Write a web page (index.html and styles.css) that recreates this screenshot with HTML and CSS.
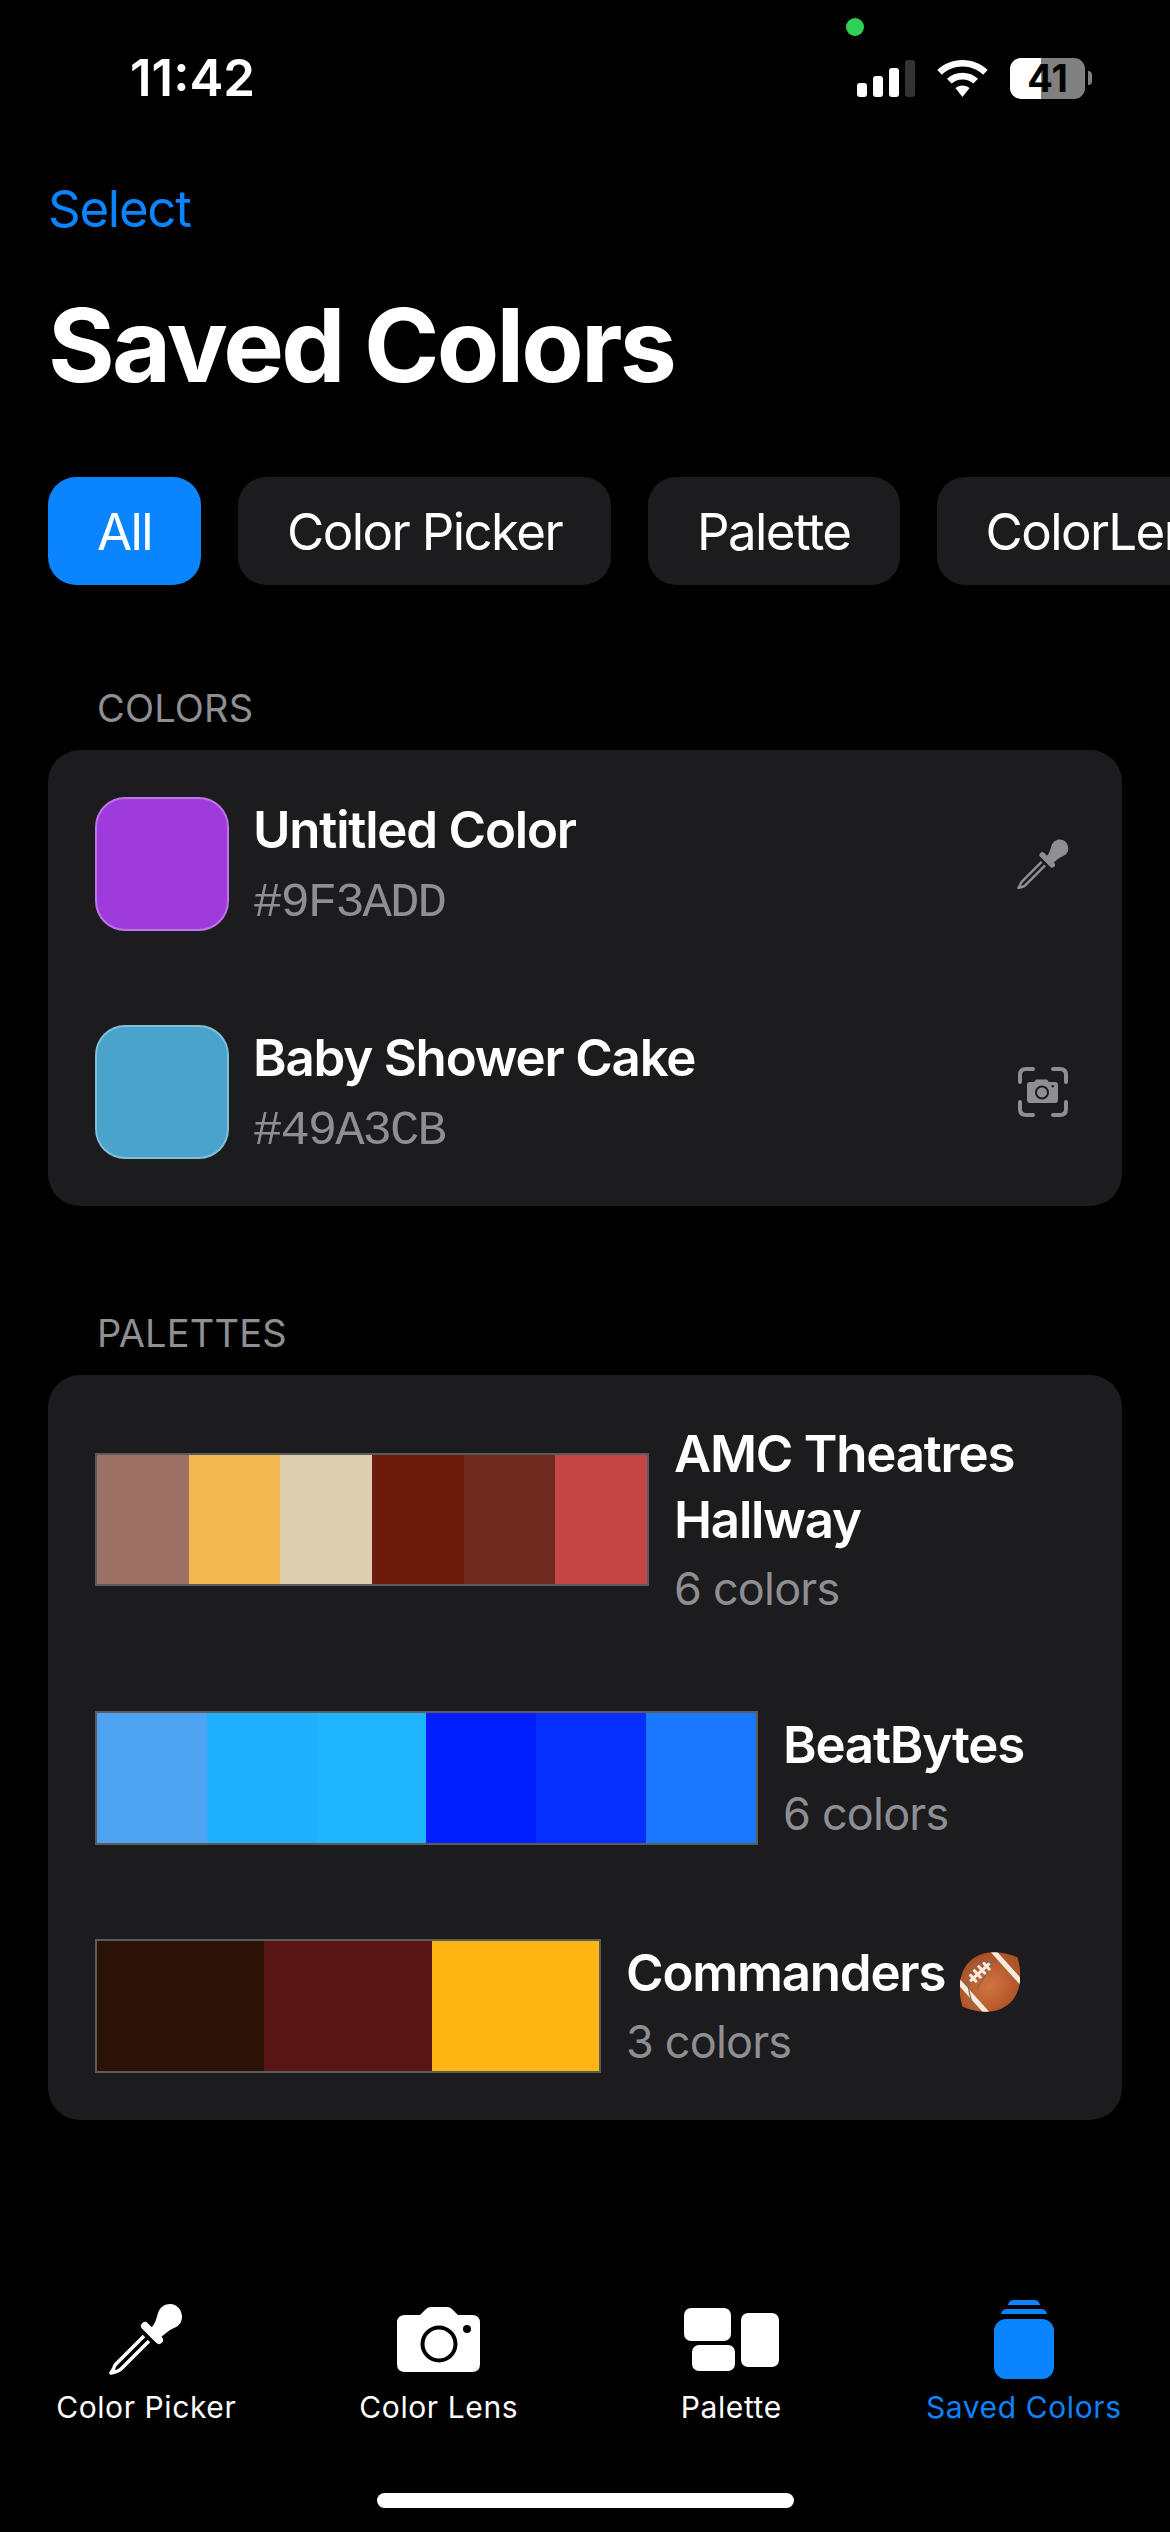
FILE: index.html
```html
<!DOCTYPE html>
<html lang="en">
<head>
    <meta charset="UTF-8">
    <meta name="viewport" content="width=device-width, initial-scale=1.0">
    <title>Saved Colors</title>
    <link rel="stylesheet" href="styles.css">
</head>
<body>
    <svg class="defs" width="0" height="0">
        <defs>
            <symbol id="dropper" viewBox="10 7 74 72">
                <path fill="currentColor" d="M52 32C56 28 57 24 59 17C61 11 66 8 71 8C78 8 83 14 83 21C83 26 80 30 75 32C70 34 66 38 61 42Z"/>
                <path fill="none" stroke="currentColor" stroke-width="8" stroke-linecap="round" d="M46 30L60 44"/>
                <path fill="none" stroke="currentColor" stroke-width="3.500" stroke-linejoin="round" d="M45 40L17 68Q15 70 14.500 73L12 77L16 76Q20 75 22 73L50 45"/>
            </symbol>
        </defs>
    </svg>

    <div class="screen">
        <div class="status-bar">
            <span class="time">11:42</span>
            <span class="camera-dot"></span>
            <div class="status-icons">
                <div class="signal">
                    <span class="bar bar-1"></span>
                    <span class="bar bar-2"></span>
                    <span class="bar bar-3"></span>
                    <span class="bar bar-4"></span>
                </div>
                <svg class="wifi" viewBox="0 0 51 37">
                    <path fill="#fff" d="M25.500 0C15.500 0 7 3.700 0.300 10L4.900 14.700C10.400 9.600 17.500 6.600 25.500 6.600S40.600 9.600 46.100 14.700L50.700 10C44 3.700 35.500 0 25.500 0Z"/>
                    <path fill="#fff" d="M25.500 12.800C19.500 12.800 14.200 15 10 18.800L14.600 23.500C17.500 21 21.300 19.400 25.500 19.400S33.500 21 36.400 23.500L41 18.800C36.800 15 31.500 12.800 25.500 12.800Z"/>
                    <path fill="#fff" d="M25.500 25.500C22.800 25.500 20.300 26.500 18.400 28.100L25.500 37L32.600 28.100C30.700 26.500 28.200 25.500 25.500 25.500Z"/>
                </svg>
                <div class="battery">
                    <div class="battery-body">
                        <span class="battery-text">41</span>
                    </div>
                    <span class="battery-nub"></span>
                </div>
            </div>
        </div>

        <div class="select-link">Select</div>
        <h1 class="page-title">Saved Colors</h1>

        <div class="chips">
            <span class="chip chip-active">All</span>
            <span class="chip">Color Picker</span>
            <span class="chip">Palette</span>
            <span class="chip">ColorLens</span>
        </div>

        <div class="section-label">COLORS</div>
        <div class="card color-card">
            <div class="color-row">
                <div class="swatch swatch-purple"></div>
                <div class="color-info">
                    <div class="item-name">Untitled Color</div>
                    <div class="hex">#9F3ADD</div>
                </div>
                <svg class="row-icon row-icon-dropper">
                    <use href="#dropper"/>
                </svg>
            </div>
            <div class="color-row">
                <div class="swatch swatch-blue"></div>
                <div class="color-info">
                    <div class="item-name">Baby Shower Cake</div>
                    <div class="hex">#49A3CB</div>
                </div>
                <svg class="row-icon" viewBox="0 0 50 50">
                    <path fill="none" stroke="currentColor" stroke-width="4" stroke-linecap="round" d="M15 2H8Q2 2 2 8V15M35 2H42Q48 2 48 8V15M2 35V42Q2 48 8 48H15M48 35V42Q48 48 42 48H35"/>
                    <path fill="currentColor" fill-rule="evenodd" d="M12 15H16L18 12.500H29L31 15H37Q40 15 40 18V33Q40 36 37 36H12Q9 36 9 33V18Q9 15 12 15ZM24 18.500A7 7 0 1 0 24 32.500A7 7 0 1 0 24 18.500ZM24 20.500A5 5 0 1 1 24 30.500A5 5 0 1 1 24 20.500ZM34.700 18A1.300 1.300 0 1 0 34.700 20.600A1.300 1.300 0 1 0 34.700 18Z"/>
                </svg>
            </div>
        </div>

        <div class="section-label section-label-palettes">PALETTES</div>
        <div class="card palette-card">
            <div class="palette-row palette-row-tall">
                <div class="strip strip-amc">
                    <span class="c-brown"></span>
                    <span class="c-sand"></span>
                    <span class="c-cream"></span>
                    <span class="c-rust"></span>
                    <span class="c-umber"></span>
                    <span class="c-red"></span>
                </div>
                <div class="palette-info">
                    <div class="item-name">AMC Theatres Hallway</div>
                    <div class="count">6 colors</div>
                </div>
            </div>
            <div class="palette-row palette-row-beat">
                <div class="strip strip-beat">
                    <span class="c-sky"></span>
                    <span class="c-cyan"></span>
                    <span class="c-cyan2"></span>
                    <span class="c-blue"></span>
                    <span class="c-blue2"></span>
                    <span class="c-azure"></span>
                </div>
                <div class="palette-info">
                    <div class="item-name">BeatBytes</div>
                    <div class="count">6 colors</div>
                </div>
            </div>
            <div class="palette-row palette-row-cmd">
                <div class="strip strip-cmd">
                    <span class="c-dark"></span>
                    <span class="c-maroon"></span>
                    <span class="c-gold"></span>
                </div>
                <div class="palette-info">
                    <div class="item-name">Commanders
                        <svg class="football" viewBox="-30 -30 60 60">
                            <defs>
                                <radialGradient id="leather" cx="45%" cy="55%" r="60%">
                                    <stop offset="0%" stop-color="#d0743f"/>
                                    <stop offset="100%" stop-color="#a64a22"/>
                                </radialGradient>
                                <clipPath id="ball">
                                    <path d="M-37 0C-27 -21 -12 -29 0 -29C12 -29 27 -21 37 0C27 21 12 29 0 29C-12 29 -27 21 -37 0Z"/>
                                </clipPath>
                            </defs>
                            <g transform="rotate(-42)">
                                <path fill="url(#leather)" d="M-37 0C-27 -21 -12 -29 0 -29C12 -29 27 -21 37 0C27 21 12 29 0 29C-12 29 -27 21 -37 0Z"/>
                                <g clip-path="url(#ball)">
                                    <path fill="none" stroke="#f3ecdf" stroke-width="5" d="M-23 -28V28M23 -28V28"/>
                                </g>
                                <path fill="none" stroke="#7d6a5c" stroke-width="1.200" d="M-31 9C-21 -6 -18 -22 0 -23C8 -23 14 -19 15 -13C10 -8 -6 -8 -15 -3"/>
                                <path fill="none" stroke="#f3ecdf" stroke-width="3" stroke-linecap="round" d="M-13 -14H11M-10 -18V-10M-4 -19V-10M2 -19V-10M8 -18V-10"/>
                            </g>
                        </svg>
                    </div>
                    <div class="count">3 colors</div>
                </div>
            </div>
        </div>

        <div class="tab-bar">
            <div class="tab">
                <div class="tab-icon-box">
                    <svg class="icon-dropper">
                        <use href="#dropper"/>
                    </svg>
                </div>
                <span>Color Picker</span>
            </div>
            <div class="tab">
                <div class="tab-icon-box">
                    <svg class="icon-camera" viewBox="0 0 83 65">
                        <path fill="currentColor" fill-rule="evenodd" d="M8 8H23L29 2Q31 0 34 0H50Q53 0 55 2L61 8H75Q83 8 83 16V57Q83 65 75 65H8Q0 65 0 57V16Q0 8 8 8ZM42 18.500A18.500 18.500 0 1 0 42 55.500A18.500 18.500 0 1 0 42 18.500ZM42 22.500A14.500 14.500 0 1 1 42 51.500A14.500 14.500 0 1 1 42 22.500ZM70 18A4 4 0 1 0 70 26A4 4 0 1 0 70 18Z"/>
                    </svg>
                </div>
                <span>Color Lens</span>
            </div>
            <div class="tab">
                <div class="tab-icon-box">
                    <svg class="icon-palette" viewBox="0 0 95 63">
                        <rect x="0" y="0" width="47" height="33" rx="7" fill="currentColor"/>
                        <rect x="8" y="37" width="43" height="26" rx="7" fill="currentColor"/>
                        <rect x="57" y="5" width="38" height="54" rx="7" fill="currentColor"/>
                    </svg>
                </div>
                <span>Palette</span>
            </div>
            <div class="tab tab-active">
                <div class="tab-icon-box">
                    <svg class="icon-saved" viewBox="0 0 60 79">
                        <path fill="currentColor" d="M14 5Q15 0 20 0H40Q45 0 46 5Z"/>
                        <path fill="currentColor" d="M7 14Q8 9 13 9H47Q52 9 53 14Z"/>
                        <rect x="0" y="19" width="60" height="60" rx="12" fill="currentColor"/>
                    </svg>
                </div>
                <span>Saved Colors</span>
            </div>
        </div>
        <div class="home-indicator"></div>
    </div>
</body>
</html>
```

FILE: styles.css
```css
/* Saved Colors screen */
* {
    box-sizing: border-box;
}

body {
    margin: 0;
    padding: 0;
    background-color: #000;
    color: #fff;
    font-family: Inter, "Noto Sans", sans-serif;
}

.screen {
    width: 1170px;
    height: 2532px;
    overflow: hidden;
    display: flex;
    flex-direction: column;
}

.defs {
    position: absolute;
}

/* status bar */
.status-bar {
    height: 100px;
    padding: 56px 78px 0 130px;
    display: flex;
    justify-content: space-between;
    align-items: center;
    position: relative;
}

.time {
    font-size: 51px;
    font-weight: 600;
    line-height: 44px;
}

.camera-dot {
    position: absolute;
    left: 846px;
    top: 18px;
    width: 18px;
    height: 18px;
    border-radius: 50%;
    background-color: #30d158;
}

.status-icons {
    display: flex;
    align-items: center;
    gap: 22px;
}

.signal {
    display: flex;
    align-items: flex-end;
    gap: 6px;
    height: 37px;
}

.bar {
    width: 10px;
    border-radius: 3px;
    background-color: #fff;
}

.bar-1 { height: 14px; }
.bar-2 { height: 21px; }
.bar-3 { height: 29px; }
.bar-4 { height: 37px; background-color: #333; }

.wifi {
    width: 51px;
    height: 37px;
}

.battery {
    display: flex;
    align-items: center;
    gap: 3px;
}

.battery-body {
    width: 75px;
    height: 41px;
    border-radius: 11px;
    background: linear-gradient(to right, #fff 41.300%, #808080 41.300%);
    color: #000;
    font-size: 38px;
    font-weight: 700;
    line-height: 41px;
    text-align: center;
}

.battery-nub {
    width: 4px;
    height: 14px;
    border-radius: 0 4px 4px 0;
    background-color: #808080;
}

/* header */
.select-link {
    margin: 78px 0 0 48px;
    font-size: 51px;
    letter-spacing: -1.300px;
    line-height: 62px;
    color: #0a84ff;
}

.page-title {
    margin: 43px 0 0 48px;
    font-size: 102px;
    font-weight: 700;
    letter-spacing: -2.800px;
    line-height: 124px;
}

/* filter chips */
.chips {
    display: flex;
    gap: 37px;
    margin-top: 70px;
    padding-left: 48px;
}

.chip {
    flex: none;
    height: 108px;
    padding: 0 49px;
    border-radius: 28px;
    background-color: #1c1c1e;
    font-size: 51px;
    letter-spacing: -1.600px;
    line-height: 110px;
}

.chip-active {
    background-color: #0a84ff;
}

/* sections */
.section-label {
    margin: 100px 0 0 97px;
    height: 47px;
    font-size: 38px;
    letter-spacing: 0.200px;
    line-height: 47px;
    color: #8e8e93;
}

.section-label-palettes {
    margin-top: 104px;
}

.card {
    margin: 18px 48px 0;
    width: 1074px;
    border-radius: 32px;
    background-color: #1c1c1e;
}

.color-card {
    height: 456px;
    padding: 47px 47px 0;
    display: flex;
    flex-direction: column;
    gap: 94px;
}

.color-row {
    display: flex;
    align-items: center;
    height: 134px;
}

.swatch {
    width: 134px;
    height: 134px;
    border-radius: 30px;
    border: 2px solid rgba(255, 255, 255, 0.3);
}

.swatch-purple { background-color: #9f3add; }
.swatch-blue { background-color: #49a3cb; }

.color-info {
    flex: 1;
    margin-left: 24px;
    padding-top: 2px;
}

.item-name {
    font-size: 51px;
    font-weight: 600;
    letter-spacing: -1.200px;
    line-height: 66px;
}

.hex {
    margin-top: 10px;
    font-family: "Liberation Mono", monospace;
    font-size: 49px;
    letter-spacing: -2px;
    line-height: 60px;
    color: #8e8e93;
}

.row-icon {
    width: 50px;
    height: 50px;
    margin-right: 7px;
    color: #8e8e93;
}

.row-icon-dropper {
    width: 52px;
    height: 52px;
    margin-right: 6px;
}

/* palettes */
.palette-card {
    height: 745px;
    padding: 0 47px;
    display: flex;
    flex-direction: column;
}

.palette-row {
    display: flex;
    align-items: center;
    gap: 25px;
}

.palette-row-tall {
    margin-top: 78px;
    height: 133px;
}

.palette-row-beat {
    margin-top: 125px;
    height: 134px;
}

.palette-row-cmd {
    margin-top: 94px;
    height: 134px;
}

.strip {
    flex: none;
    display: flex;
    height: 100%;
    border: 2px solid rgba(255, 255, 255, 0.28);
}

.strip span {
    flex: 1;
}

.strip-amc { width: 554px; }
.strip-beat { width: 663px; }
.strip-cmd { width: 506px; }

.c-brown { background-color: #9a7164; }
.c-sand { background-color: #f2b84f; }
.c-cream { background-color: #dbcfb0; }
.c-rust { background-color: #6c1b0c; }
.c-umber { background-color: #6f2b1f; }
.c-red { background-color: #c64646; }
.c-sky { background-color: #4da2f2; }
.c-cyan { background-color: #1fb0ff; }
.c-cyan2 { background-color: #20b6ff; }
.c-blue { background-color: #001eff; }
.c-blue2 { background-color: #062eff; }
.c-azure { background-color: #1878ff; }
.c-dark { background-color: #2a1206; }
.c-maroon { background-color: #591414; }
.c-gold { background-color: #ffb612; }

.count {
    margin-top: 6px;
    font-size: 45px;
    letter-spacing: -0.800px;
    line-height: 60px;
    color: #8e8e93;
}

.football {
    width: 60px;
    height: 60px;
    margin: -10px 0 -10px 3px;
    vertical-align: -11px;
}

/* bottom tabs */
.tab-bar {
    margin-top: 177px;
    display: grid;
    grid-template-columns: repeat(4, 1fr);
}

.tab {
    display: flex;
    flex-direction: column;
    align-items: center;
    gap: 8px;
    font-size: 30px;
    letter-spacing: 0.600px;
    line-height: 36px;
}

.tab-icon-box {
    height: 84px;
    display: flex;
    align-items: center;
    justify-content: center;
}

.icon-dropper { width: 74px; height: 72px; }
.icon-camera { width: 83px; height: 65px; }
.icon-palette { width: 95px; height: 63px; }
.icon-saved { width: 60px; height: 79px; }

.tab-active {
    color: #0a84ff;
}

.home-indicator {
    width: 417px;
    height: 15px;
    margin: 68px auto 0;
    border-radius: 8px;
    background-color: #fff;
}
```
